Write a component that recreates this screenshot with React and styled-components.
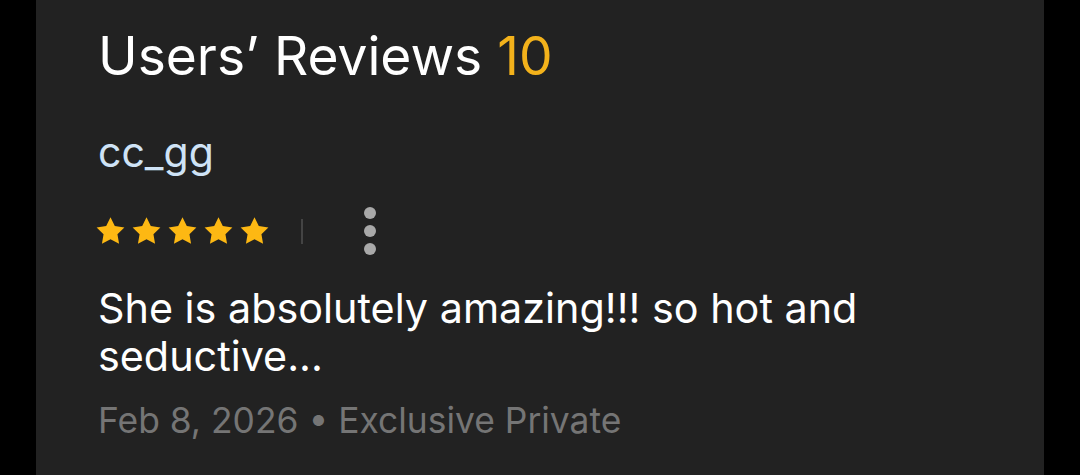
import React from 'react'
import styled, { createGlobalStyle } from 'styled-components'

const GlobalStyle = createGlobalStyle`
  html, body {
    margin: 0;
    padding: 0;
    background: #000;
  }
  body {
    font-family: Inter, "Noto Sans", sans-serif;
  }
`

const Page = styled.div`
  width: 1080px;
  height: 475px;
  overflow: hidden;
  background: #000;
`

const Panel = styled.section`
  margin-left: 36px;
  width: 1008px;
  height: 475px;
  background: #222222;
  padding: 24px 0 0 62px;
  box-sizing: border-box;
`

const Title = styled.h2`
  margin: 0;
  font-size: 53.3px;
  font-weight: 400;
  color: #fff;
  line-height: 64px;

  span {
    color: #f3b21b;
  }
`

const User = styled.div`
  margin-top: 39px;
  font-size: 41px;
  color: #cfe3f6;
  line-height: 50px;
`

const RatingRow = styled.div`
  display: flex;
  align-items: center;
  margin-top: 28px;
  height: 52px;
`

const Stars = styled.div`
  display: flex;
  gap: 7px;
  margin-left: -2px;
`

const Divider = styled.div`
  width: 2px;
  height: 25px;
  background: #444;
  margin-left: 32px;
`

const MoreButton = styled.button`
  display: flex;
  flex-direction: column;
  gap: 6px;
  margin-left: 61px;
  padding: 0;
  background: none;
  border: none;

  i {
    width: 12px;
    height: 12px;
    border-radius: 50%;
    background: #a9a9a9;
  }
`

const Body = styled.p`
  margin: 27px 0 0;
  width: 820px;
  font-size: 41.3px;
  line-height: 48px;
  color: #fff;
`

const Meta = styled.div`
  margin-top: 19px;
  font-size: 35.4px;
  color: #757575;
  line-height: 44px;
`

const Star = () => (
  <svg width="29" height="28" viewBox="0 0 24 23.2">
    <path
      d="M12 .3l3.55 7.2 7.95 1.15-5.75 5.6 1.36 7.9L12 18.4l-7.11 3.75 1.36-7.9L.5 8.65l7.95-1.15z"
      fill="#fdb813"
    />
  </svg>
)

const App = () => {
  return (
    <>
      <GlobalStyle />
      <Page>
        <Panel>
          <Title>
            Users’ Reviews <span>10</span>
          </Title>
          <User>cc_gg</User>
          <RatingRow>
            <Stars>
              {[0, 1, 2, 3, 4].map(i => <Star key={i} />)}
            </Stars>
            <Divider />
            <MoreButton aria-label="more">
              <i />
              <i />
              <i />
            </MoreButton>
          </RatingRow>
          <Body>She is absolutely amazing!!! so hot and seductive...</Body>
          <Meta>Feb 8, 2026 • Exclusive Private</Meta>
        </Panel>
      </Page>
    </>
  )
}

export default App
